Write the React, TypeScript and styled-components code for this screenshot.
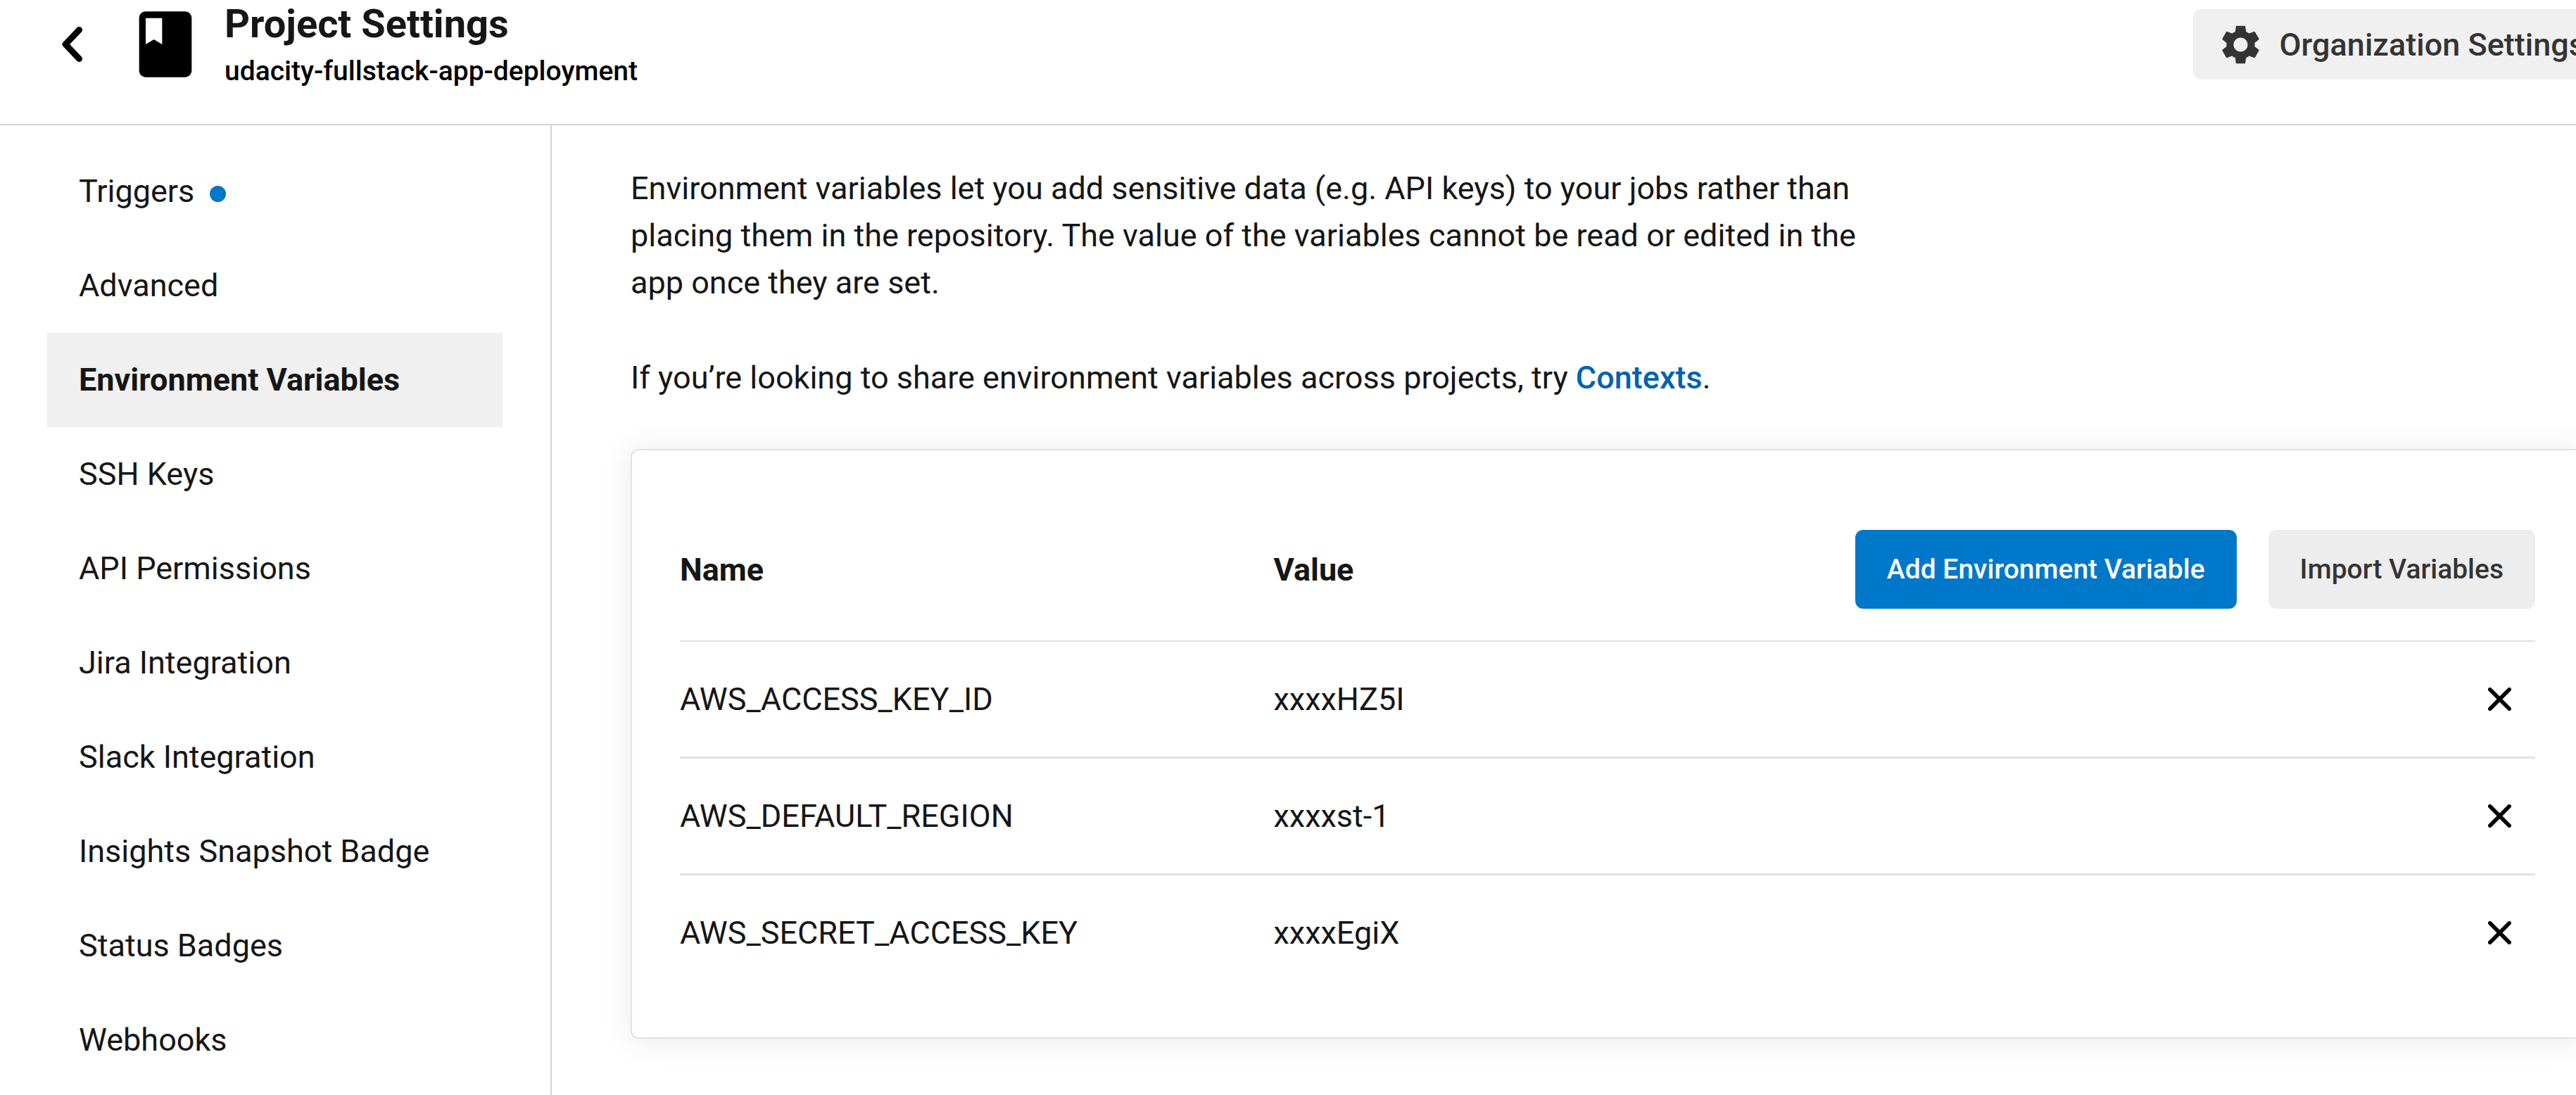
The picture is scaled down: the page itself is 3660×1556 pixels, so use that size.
import React from "react";
import styled, { createGlobalStyle } from "styled-components";
import { MdBook, MdSettings } from "react-icons/md";

const color = {
  text: "#161616",
  muted: "#343434",
  rule: "#d4d4d4",
  line: "#e2e2e2",
  highlight: "#f0f0f0",
  neutral: "#ededed",
  blue: "#0078ca",
  link: "#0461b0",
};

const GlobalStyle = createGlobalStyle`
  *, *::before, *::after { box-sizing: border-box; }
  body {
    margin: 0;
    background: #fff;
    color: ${color.text};
    font: 400 45px/67px Roboto, "Liberation Sans", sans-serif;
  }
  h1, p, ul { margin: 0; padding: 0; }
  button { border: 0; font: inherit; cursor: pointer; }
`;

const Viewport = styled.div`
  min-height: 100vh;
  overflow: hidden;
`;

/* The settings page keeps its right gutter outside of the visible area. */
const Page = styled.div`
  display: flex;
  flex-direction: column;
  min-height: 100vh;
  width: calc(100% + 80px);
`;

const Header = styled.header`
  display: flex;
  align-items: flex-start;
  gap: 28px;
  padding: 1px 33px 41px 67px;
  border-bottom: 2px solid ${color.rule};
`;

const HeaderIcons = styled.div`
  display: flex;
  align-items: center;
  gap: 40px;
  height: 124px;
`;

const BackButton = styled.button`
  display: flex;
  width: 72px;
  padding: 0 21px;
  background: none;
  color: #000;
`;

const Heading = styled.div`
  flex: 1;
`;

const Title = styled.h1`
  font-size: 56px;
  font-weight: 700;
  line-height: 67px;
`;

const ProjectName = styled.p`
  color: #000;
  font-size: 39px;
  font-weight: 500;
`;

const OrgButton = styled.button`
  display: flex;
  align-items: center;
  gap: 22px;
  height: 100px;
  margin-top: 12px;
  padding: 0 34px;
  border-radius: 11px;
  background: ${color.highlight};
  color: ${color.muted};
  font-weight: 500;
  white-space: nowrap;
`;

const Body = styled.div`
  display: flex;
  flex: 1;
`;

const Sidebar = styled.nav`
  flex: 0 0 784px;
  padding: 27px 68px 0 67px;
  border-right: 2px solid ${color.rule};
`;

const NavList = styled.ul`
  list-style: none;
`;

const NavLink = styled.a<{ $active?: boolean }>`
  display: flex;
  align-items: baseline;
  gap: 22px;
  padding: 0 45px;
  background: ${(p) => (p.$active ? color.highlight : "transparent")};
  color: inherit;
  font-weight: ${(p) => (p.$active ? 700 : 400)};
  line-height: 134px;
  text-decoration: none;
  white-space: nowrap;
`;

const Dot = styled.span`
  width: 23px;
  height: 23px;
  border-radius: 50%;
  background: ${color.blue};
`;

const Main = styled.main`
  flex: 1;
  min-width: 0;
  padding: 56px 68px 68px 112px;
`;

const Intro = styled.div`
  display: grid;
  gap: 68px;
  max-width: 1792px;
  margin-bottom: 68px;
`;

const ContextsLink = styled.a`
  color: ${color.link};
  font-weight: 500;
  text-decoration: none;
`;

const Card = styled.section`
  padding: 68px;
  border: 2px solid ${color.line};
  border-radius: 11px;
  box-shadow: 0 2px 45px rgba(0, 0, 0, 0.09);
`;

const Table = styled.table`
  width: 100%;
  border-collapse: separate;
  border-spacing: 0;
  text-align: left;

  th, td { padding: 0; }
  thead th, thead td {
    padding: 45px 0;
    border-bottom: 2px solid ${color.line};
  }
  tbody th, tbody td { height: 166px; font-weight: 400; border-bottom: 3px solid ${color.line}; }
  tbody tr:last-child > * { height: 162px; border-bottom: 0; }
`;

const NameHeading = styled.th`
  width: 32%;
  font-weight: 700;
`;

const ValueHeading = styled.th`
  font-weight: 700;
`;

const Actions = styled.div`
  display: flex;
  justify-content: flex-end;
  gap: 45px;
`;

const ActionButton = styled.button<{ $primary?: boolean }>`
  height: 112px;
  padding: 0 45px;
  border-radius: 11px;
  background: ${(p) => (p.$primary ? color.blue : color.neutral)};
  color: ${(p) => (p.$primary ? "#fff" : color.muted)};
  font-size: 39px;
  font-weight: 500;
  white-space: nowrap;
`;

const RemoveButton = styled.button`
  display: flex;
  margin-left: auto;
  padding: 34px;
  background: none;
  color: #000;
`;

const ChevronIcon = () => (
  <svg width="30" height="52" viewBox="0 0 30 52" fill="none" stroke="currentColor"
    strokeWidth="9" strokeLinecap="round" strokeLinejoin="round" aria-hidden="true">
    <path d="M24.5 5.5 5 26l19.5 20.5" />
  </svg>
);

const CrossIcon = () => (
  <svg width="33" height="33" viewBox="0 0 33 33" fill="none" stroke="currentColor"
    strokeWidth="5.6" strokeLinecap="round" aria-hidden="true">
    <path d="M2.8 2.8 30.2 30.2M30.2 2.8 2.8 30.2" />
  </svg>
);

const sections = [
  { label: "Triggers", isNew: true },
  { label: "Advanced" },
  { label: "Environment Variables", active: true },
  { label: "SSH Keys" },
  { label: "API Permissions" },
  { label: "Jira Integration" },
  { label: "Slack Integration" },
  { label: "Insights Snapshot Badge" },
  { label: "Status Badges" },
  { label: "Webhooks" },
];

const variables = [
  { name: "AWS_ACCESS_KEY_ID", value: "xxxxHZ5I" },
  { name: "AWS_DEFAULT_REGION", value: "xxxxst-1" },
  { name: "AWS_SECRET_ACCESS_KEY", value: "xxxxEgiX" },
];

export default function App() {
  return (
    <Viewport>
      <GlobalStyle />
      <Page>
        <Header>
          <HeaderIcons>
            <BackButton type="button" aria-label="Back">
              <ChevronIcon />
            </BackButton>
            <MdBook size={112} color="#000" aria-hidden="true" />
          </HeaderIcons>
          <Heading>
            <Title>Project Settings</Title>
            <ProjectName>udacity-fullstack-app-deployment</ProjectName>
          </Heading>
          <OrgButton type="button">
            <MdSettings size={67} aria-hidden="true" />
            Organization Settings
          </OrgButton>
        </Header>
        <Body>
          <Sidebar>
            <NavList>
              {sections.map((s) => (
                <li key={s.label}>
                  <NavLink href="#" $active={s.active} aria-current={s.active ? "page" : undefined}>
                    {s.label}
                    {s.isNew && <Dot />}
                  </NavLink>
                </li>
              ))}
            </NavList>
          </Sidebar>
          <Main>
            <Intro>
              <p>
                Environment variables let you add sensitive data (e.g. API keys) to your jobs
                rather than placing them in the repository. The value of the variables cannot be
                read or edited in the app once they are set.
              </p>
              <p>
                If you’re looking to share environment variables across projects, try{" "}
                <ContextsLink href="#">Contexts</ContextsLink>.
              </p>
            </Intro>
            <Card>
              <Table>
                <thead>
                  <tr>
                    <NameHeading scope="col">Name</NameHeading>
                    <ValueHeading scope="col">Value</ValueHeading>
                    <td>
                      <Actions>
                        <ActionButton type="button" $primary>Add Environment Variable</ActionButton>
                        <ActionButton type="button">Import Variables</ActionButton>
                      </Actions>
                    </td>
                  </tr>
                </thead>
                <tbody>
                  {variables.map((v) => (
                    <tr key={v.name}>
                      <th scope="row">{v.name}</th>
                      <td>{v.value}</td>
                      <td>
                        <RemoveButton type="button" aria-label={`Remove ${v.name}`}>
                          <CrossIcon />
                        </RemoveButton>
                      </td>
                    </tr>
                  ))}
                </tbody>
              </Table>
            </Card>
          </Main>
        </Body>
      </Page>
    </Viewport>
  );
}
